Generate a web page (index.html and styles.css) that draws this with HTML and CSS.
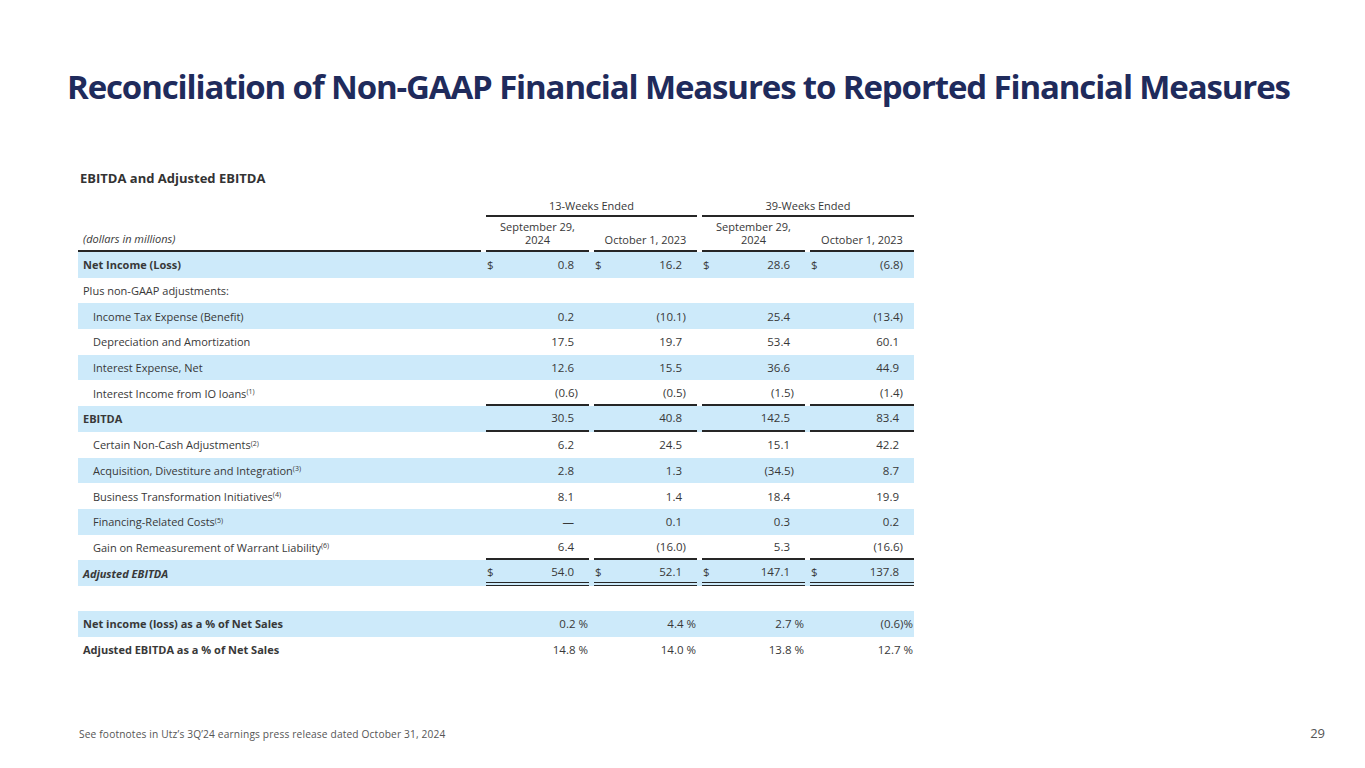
FILE: index.html
```html
<!DOCTYPE html>
<html lang="en">
<head>
<meta charset="utf-8">
<title>Reconciliation of Non-GAAP Financial Measures</title>
<link rel="stylesheet" href="styles.css">
</head>
<body>
<div class="slide">
  <h1 class="title">Reconciliation of Non-GAAP Financial Measures to Reported Financial Measures</h1>
  <section class="fin">
    <h2 class="fin-title">EBITDA and Adjusted EBITDA</h2>
    <div class="grid">
      <div class="row group">
        <div class="c lbl"></div>
        <div class="c span2">13-Weeks Ended</div>
        <div class="c span2">39-Weeks Ended</div>
      </div>
      <div class="row head">
        <div class="c lbl"><em>(dollars in millions)</em></div>
        <div class="c h">September 29,<br>2024</div>
        <div class="c h">October 1, 2023</div>
        <div class="c h">September 29,<br>2024</div>
        <div class="c h">October 1, 2023</div>
      </div>

      <div class="row blue bold">
        <div class="c lbl">Net Income (Loss)</div>
        <div class="c v"><span class="d">$</span><span class="n">0.8</span></div>
        <div class="c v"><span class="d">$</span><span class="n">16.2</span></div>
        <div class="c v"><span class="d">$</span><span class="n">28.6</span></div>
        <div class="c v"><span class="d">$</span><span class="n p">(6.8)</span></div>
      </div>
      <div class="row">
        <div class="c lbl">Plus non-GAAP adjustments:</div>
        <div class="c v"></div><div class="c v"></div><div class="c v"></div><div class="c v"></div>
      </div>
      <div class="row blue">
        <div class="c lbl ind">Income Tax Expense (Benefit)</div>
        <div class="c v"><span class="n">0.2</span></div>
        <div class="c v"><span class="n p">(10.1)</span></div>
        <div class="c v"><span class="n">25.4</span></div>
        <div class="c v"><span class="n p">(13.4)</span></div>
      </div>
      <div class="row">
        <div class="c lbl ind">Depreciation and Amortization</div>
        <div class="c v"><span class="n">17.5</span></div>
        <div class="c v"><span class="n">19.7</span></div>
        <div class="c v"><span class="n">53.4</span></div>
        <div class="c v"><span class="n">60.1</span></div>
      </div>
      <div class="row blue">
        <div class="c lbl ind">Interest Expense, Net</div>
        <div class="c v"><span class="n">12.6</span></div>
        <div class="c v"><span class="n">15.5</span></div>
        <div class="c v"><span class="n">36.6</span></div>
        <div class="c v"><span class="n">44.9</span></div>
      </div>
      <div class="row">
        <div class="c lbl ind">Interest Income from IO loans<sup>(1)</sup></div>
        <div class="c v rule"><span class="n p">(0.6)</span></div>
        <div class="c v rule"><span class="n p">(0.5)</span></div>
        <div class="c v rule"><span class="n p">(1.5)</span></div>
        <div class="c v rule"><span class="n p">(1.4)</span></div>
      </div>
      <div class="row blue bold">
        <div class="c lbl">EBITDA</div>
        <div class="c v rule"><span class="n">30.5</span></div>
        <div class="c v rule"><span class="n">40.8</span></div>
        <div class="c v rule"><span class="n">142.5</span></div>
        <div class="c v rule"><span class="n">83.4</span></div>
      </div>
      <div class="row">
        <div class="c lbl ind">Certain Non-Cash Adjustments<sup>(2)</sup></div>
        <div class="c v"><span class="n">6.2</span></div>
        <div class="c v"><span class="n">24.5</span></div>
        <div class="c v"><span class="n">15.1</span></div>
        <div class="c v"><span class="n">42.2</span></div>
      </div>
      <div class="row blue">
        <div class="c lbl ind">Acquisition, Divestiture and Integration<sup>(3)</sup></div>
        <div class="c v"><span class="n">2.8</span></div>
        <div class="c v"><span class="n">1.3</span></div>
        <div class="c v"><span class="n p">(34.5)</span></div>
        <div class="c v"><span class="n">8.7</span></div>
      </div>
      <div class="row">
        <div class="c lbl ind">Business Transformation Initiatives<sup>(4)</sup></div>
        <div class="c v"><span class="n">8.1</span></div>
        <div class="c v"><span class="n">1.4</span></div>
        <div class="c v"><span class="n">18.4</span></div>
        <div class="c v"><span class="n">19.9</span></div>
      </div>
      <div class="row blue">
        <div class="c lbl ind">Financing-Related Costs<sup>(5)</sup></div>
        <div class="c v"><span class="n">&mdash;</span></div>
        <div class="c v"><span class="n">0.1</span></div>
        <div class="c v"><span class="n">0.3</span></div>
        <div class="c v"><span class="n">0.2</span></div>
      </div>
      <div class="row">
        <div class="c lbl ind">Gain on Remeasurement of Warrant Liability<sup>(6)</sup></div>
        <div class="c v rule"><span class="n">6.4</span></div>
        <div class="c v rule"><span class="n p">(16.0)</span></div>
        <div class="c v rule"><span class="n">5.3</span></div>
        <div class="c v rule"><span class="n p">(16.6)</span></div>
      </div>
      <div class="row blue bold">
        <div class="c lbl"><em>Adjusted EBITDA</em></div>
        <div class="c v dbl"><span class="d">$</span><span class="n">54.0</span></div>
        <div class="c v dbl"><span class="d">$</span><span class="n">52.1</span></div>
        <div class="c v dbl"><span class="d">$</span><span class="n">147.1</span></div>
        <div class="c v dbl"><span class="d">$</span><span class="n">137.8</span></div>
      </div>
      <div class="row spacer"></div>
      <div class="row blue bold">
        <div class="c lbl">Net income (loss) as a % of Net Sales</div>
        <div class="c v"><span class="n pc">0.2 %</span></div>
        <div class="c v"><span class="n pc">4.4 %</span></div>
        <div class="c v"><span class="n pc">2.7 %</span></div>
        <div class="c v"><span class="n pc">(0.6)%</span></div>
      </div>
      <div class="row bold">
        <div class="c lbl">Adjusted EBITDA as a % of Net Sales</div>
        <div class="c v"><span class="n pc">14.8 %</span></div>
        <div class="c v"><span class="n pc">14.0 %</span></div>
        <div class="c v"><span class="n pc">13.8 %</span></div>
        <div class="c v"><span class="n pc">12.7 %</span></div>
      </div>
    </div>
  </section>
  <footer class="foot">
    <span class="note">See footnotes in Utz’s 3Q’24 earnings press release dated October 31, 2024</span>
    <span class="page">29</span>
  </footer>
</div>
</body>
</html>
```

FILE: styles.css
```css
html, body {
  margin: 0;
  padding: 0;
  background: #ffffff;
}

.slide {
  width: 1365px;
  height: 768px;
  box-sizing: border-box;
  position: relative;
  display: flex;
  flex-direction: column;
  font-family: "Open Sans", "Liberation Sans", sans-serif;
}

.title {
  margin: 65px 0 0 67px;
  font-family: "Open Sans", "Liberation Sans", sans-serif;
  font-weight: 700;
  font-size: 33px;
  line-height: 44px;
  letter-spacing: -1.13px;
  color: #1f2b5c;
  white-space: nowrap;
}

.fin {
  margin: 60px 0 0 78px;
  color: #383838;
  font-size: 11px;
}

.fin-title {
  margin: 0 0 0 2px;
  font-size: 13px;
  font-weight: 700;
  line-height: 18px;
  color: #333333;
}

.grid {
  margin-top: 7px;
  width: 836px;
}

.row {
  display: grid;
  grid-template-columns: 403px 103px 103px 103px 104px;
  column-gap: 5px;
  height: 25.7px;
  align-items: stretch;
}

.row.blue {
  background: #cdeafa;
}

.row.bold .lbl {
  font-weight: 700;
}

.row.spacer {
  display: block;
  height: 25px;
}

.c {
  display: flex;
  align-items: center;
  box-sizing: border-box;
  white-space: nowrap;
}

.lbl {
  padding-left: 5px;
}

.lbl.ind {
  padding-left: 15px;
}

.lbl sup {
  font-size: 7px;
  line-height: 0;
  position: relative;
  top: -1px;
  vertical-align: super;
}

.row.group {
  height: 23px;
}

.span2 {
  grid-column: span 2;
  justify-content: center;
  border-bottom: 2px solid #262626;
  padding-top: 2px;
}

.row.head {
  height: 35px;
}

.row.head .c {
  border-bottom: 2px solid #262626;
  padding-bottom: 1px;
}

.row.head .lbl {
  align-items: flex-end;
  padding-bottom: 4px;
}

.row.head .h {
  justify-content: center;
  align-items: flex-end;
  text-align: center;
  line-height: 13px;
  padding-bottom: 4px;
}

.v {
  justify-content: space-between;
  padding-left: 1px;
  padding-right: 15px;
  font-size: 11.5px;
}

.v .n {
  margin-left: auto;
}

.v .n.p {
  margin-right: -4px;
}

.v .n.pc {
  margin-right: -14px;
}

.v.rule {
  border-bottom: 2px solid #262626;
}

.v.dbl {
  border-bottom: 4px double #262626;
}

.foot {
  position: absolute;
  left: 79px;
  right: 40px;
  top: 724px;
  display: flex;
  justify-content: space-between;
  align-items: baseline;
}

.note {
  font-family: "Open Sans", "Lato", sans-serif;
  font-size: 10.2px;
  letter-spacing: 0.15px;
  color: #555555;
}

.page {
  font-family: "Open Sans", "Lato", sans-serif;
  font-size: 13px;
  color: #555555;
}
```
